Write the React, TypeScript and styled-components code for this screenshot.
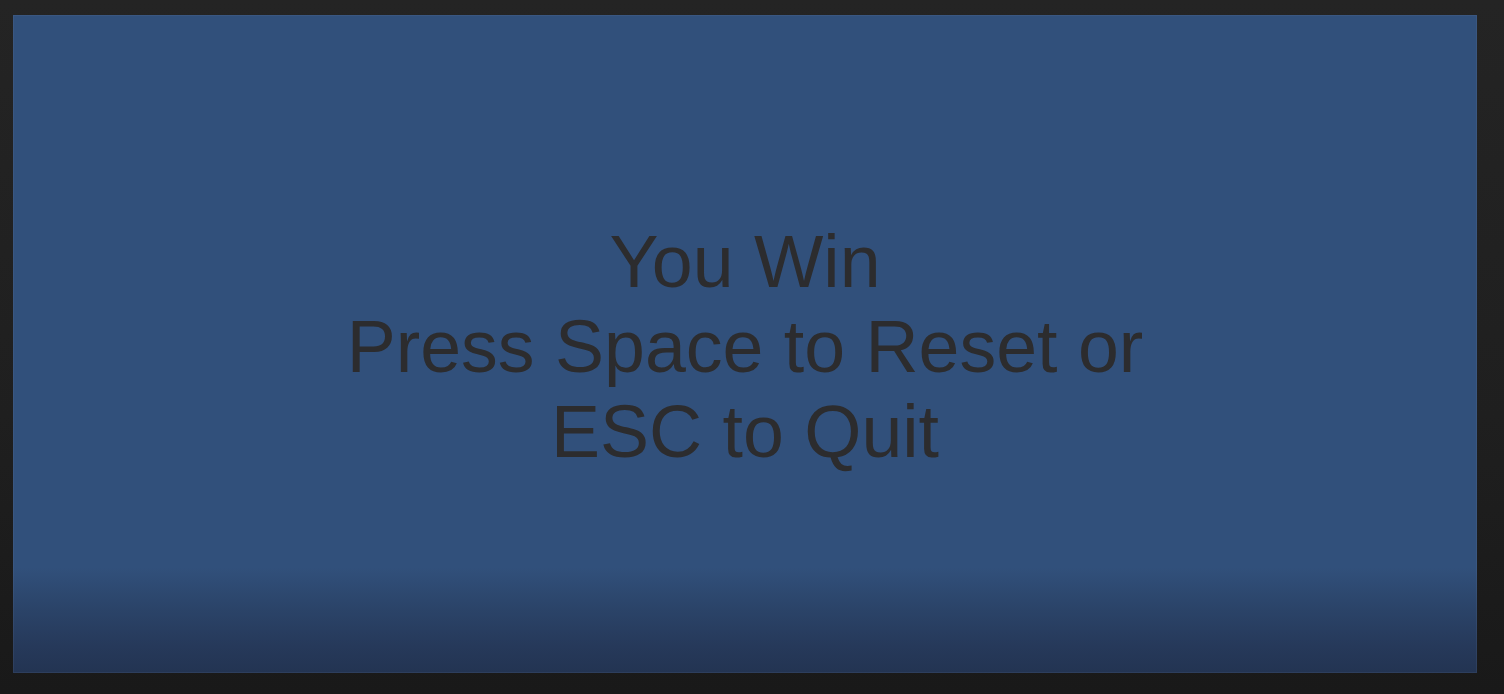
import styled, { createGlobalStyle } from 'styled-components';

const GlobalStyle = createGlobalStyle`
  html, body {
    margin: 0;
    padding: 0;
    background: #1e1e1e;
  }
`;

const Frame = styled.div`
  box-sizing: border-box;
  width: 1504px;
  height: 694px;
  padding: 15px 27px 21px 13px;
  background: linear-gradient(180deg, #242424 0%, #1f1f1f 60%, #191919 100%);
  display: flex;
`;

const Viewport = styled.div`
  flex: 1;
  display: flex;
  align-items: center;
  justify-content: center;
  box-shadow: inset 0 0 0 1px rgba(120, 140, 170, 0.12);
  background: linear-gradient(
    180deg,
    #31507b 0%,
    #31507b 84%,
    #2b4469 90%,
    #26395a 96%,
    #233452 100%
  );
`;

const Message = styled.div`
  width: 880px;
  margin-top: 4px;
  font-family: 'Liberation Sans', Arial, sans-serif;
  font-size: 73.5px;
  line-height: 85px;
  color: #2c2c2e;
  text-align: center;
`;

const Line = styled.div``;

export default function App() {
  return (
    <>
      <GlobalStyle />
      <Frame>
        <Viewport>
          <Message>
            <Line>You Win</Line>
            <Line>Press Space to Reset or ESC to Quit</Line>
          </Message>
        </Viewport>
      </Frame>
    </>
  );
}
